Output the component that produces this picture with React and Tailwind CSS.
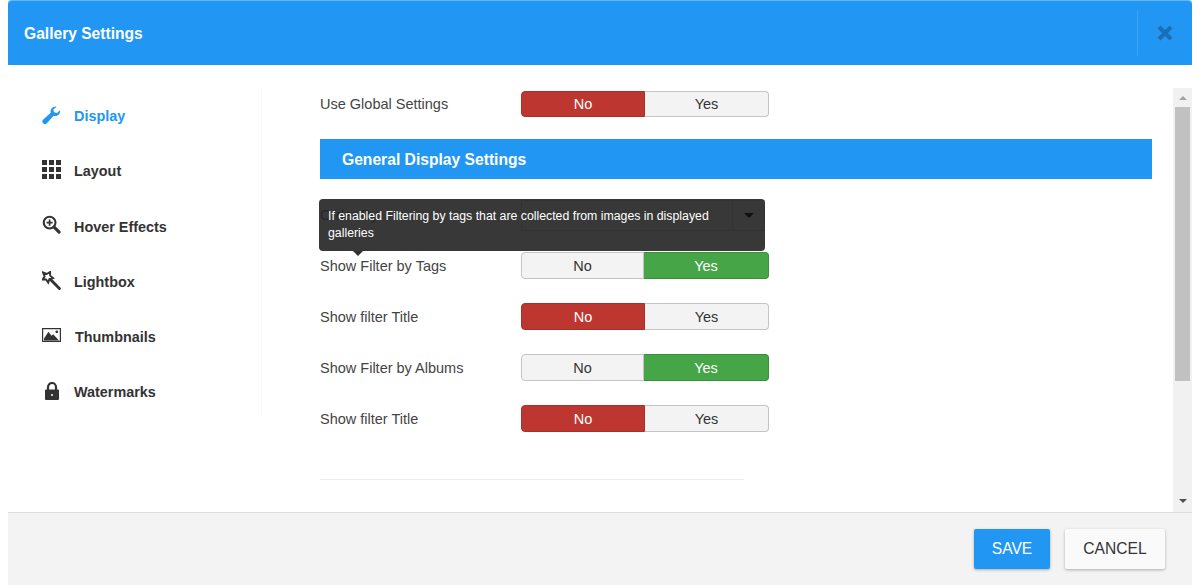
import React from "react";

const WrenchIcon = ({ className }) => (
  <svg viewBox="0 0 20 20" className={className} fill="currentColor">
    <path d="M14.2 1a5.2 5.2 0 0 0-5 6.7L1.3 14.8a2.7 2.7 0 0 0 3.8 3.900l7.200-7.900a5.2 5.2 0 0 0 6.700-5.900l-3.300 3-3-.7-.8-3 3.400-3a5 5 0 0 0-1.100-.2z" />
  </svg>
);

const GridIcon = ({ className }) => (
  <svg viewBox="0 0 19 19" className={className} fill="currentColor">
    {[0, 7, 14].map((y) =>
      [0, 7, 14].map((x) => <rect key={`${x}-${y}`} x={x} y={y} width="5" height="5" />)
    )}
  </svg>
);

const ZoomIcon = ({ className }) => (
  <svg viewBox="0 0 20 20" className={className} fill="none" stroke="currentColor">
    <circle cx="8" cy="8" r="6.2" strokeWidth="2.2" />
    <path d="M4.8 8h6.4M8 4.8v6.4" strokeWidth="1.8" />
    <path d="M12.8 12.8L18 18" strokeWidth="3.2" strokeLinecap="round" />
  </svg>
);

const WandIcon = ({ className }) => (
  <svg viewBox="0 0 20 20" className={className} fill="none" stroke="currentColor">
    <path d="M1 1.5l4 1.6L8.5 1l.1 3.9 3 2.5-3.8 1.100-1.300 3.700-2.200-3.200-3.900-.1 2.400-3.100z" strokeWidth="2" strokeLinejoin="miter" />
    <path d="M9.5 9.5L18.3 18.3" strokeWidth="3" strokeLinecap="round" />
  </svg>
);

const PictureIcon = ({ className }) => (
  <svg viewBox="0 0 19 14" className={className} fill="currentColor">
    <path fillRule="evenodd" d="M0 0h19v14H0zM1.2 1.2v11.6h16.6V1.2z" />
    <path d="M2 12.5v-2L6.5 3.8l3 4 1.7-1.5 5.8 6.2z" />
    <circle cx="14.8" cy="3.8" r="1.4" />
  </svg>
);

const LockIcon = ({ className }) => (
  <svg viewBox="0 0 14 18" className={className}>
    <path d="M3 8V5a4 4 0 0 1 8 0v3" fill="none" stroke="currentColor" strokeWidth="2.2" />
    <path fillRule="evenodd" fill="currentColor" d="M1 7.5h12a1 1 0 0 1 1 1V17a1 1 0 0 1-1 1H1a1 1 0 0 1-1-1V8.500a1 1 0 0 1 1-1zM7 12a1 1 0 1 0 0 2 1 1 0 0 0 0-2z" />
  </svg>
);

const navItems = [
  { label: "Display", icon: <WrenchIcon className="w-[20px] h-[20px]" />, active: true, gap: "gap-[13px]" },
  { label: "Layout", icon: <GridIcon className="w-[19px] h-[19px]" />, gap: "gap-[13px]" },
  { label: "Hover Effects", icon: <ZoomIcon className="w-[19px] h-[19px]" />, gap: "gap-[13px]" },
  { label: "Lightbox", icon: <WandIcon className="w-[19px] h-[19px]" />, gap: "gap-[13px]" },
  { label: "Thumbnails", icon: <PictureIcon className="w-[19px] h-[14px]" />, gap: "gap-[14px]" },
  { label: "Watermarks", icon: <LockIcon className="w-[14px] h-[18px]" />, gap: "gap-[13px]" },
];

const SwitchRow = ({ label, value, rowClass = "h-[27px] mb-[24px]", textPad = "pt-[2px]" }) => (
  <div className={`flex items-center ${rowClass}`}>
    <div className={`w-[201px] ${textPad} text-[14.5px] text-[#444]`}>{label}</div>
    <div className="flex w-[248px] h-full text-[14.5px]">
      <div
        className={`flex items-center justify-center ${textPad} rounded-l-[4px] border ${
          value === "no"
            ? "w-[124px] bg-[#bd362f] border-[#a9302a] text-white font-medium"
            : "w-[123px] bg-[#f3f3f3] border-[#c4c4c4] text-[#333]"
        }`}
      >
        No
      </div>
      <div
        className={`flex-1 flex items-center justify-center ${textPad} rounded-r-[4px] border border-l-0 ${
          value === "yes"
            ? "bg-[#46a546] border-[#3b8f3b] text-white"
            : "bg-[#f3f3f3] border-[#c4c4c4] text-[#333]"
        }`}
      >
        Yes
      </div>
    </div>
  </div>
);

export default function App() {
  return (
    <div className="w-[1200px] h-[586px] bg-white overflow-hidden font-['Liberation_Sans',Arial,sans-serif]">
      <div className="mx-2 w-[1184px] h-[585px] flex flex-col">
        {/* Header */}
        <div className="h-[65px] bg-[#2196f3] rounded-t-[4px] border-t border-[#64b5f6] flex items-center justify-between">
          <h3 className="pl-4 pt-[1px] text-[15.6px] font-bold text-white">Gallery Settings</h3>
          <div className="h-[46px] w-[55px] border-l border-[#3ea3f5] flex items-center justify-center">
            <svg viewBox="0 0 16 16" className="w-[16px] h-[16px] text-[#1a6fb5]" fill="none" stroke="currentColor" strokeWidth="4">
              <path d="M2 2l12 12M14 2L2 14" />
            </svg>
          </div>
        </div>

        {/* Body */}
        <div className="h-[447px] flex pt-[23px]">
          <div className="w-[254px] h-[327px] border-r border-[#f8f8f8] pl-[34px] pt-[1px]">
            {navItems.map((item) => (
              <div
                key={item.label}
                className={`h-[55.2px] flex items-center ${item.gap} text-[14.4px] font-bold ${
                  item.active ? "text-[#2196f3]" : "text-[#333]"
                }`}
              >
                <span className="w-[19px] flex justify-center -mt-[4px]">{item.icon}</span>
                <span className="pt-[1px]">{item.label}</span>
              </div>
            ))}
          </div>

          <div className="relative flex-1 pl-[58px] pt-[3px]">
            <SwitchRow label="Use Global Settings" value="no" rowClass="h-[26px] mb-[25px]" textPad="pt-[1px]" />
            <div className="mr-[40px] h-[40px] -mt-[3px] bg-[#2196f3] flex items-center pl-[22px] pt-[2px] text-[15.65px] font-bold text-white">
              General Display Settings
            </div>

            {/* Row hidden behind the tooltip */}
            <div className="flex items-center h-[31px] mt-[21px] mb-[21px]">
              <div className="w-[201px] text-[14.5px] text-[#444]">Order By</div>
              <div className="w-[244px] h-[31px] border border-[#ccc] flex justify-end">
                <div className="w-[32px] border-l border-[#ccc]" />
              </div>
            </div>

            <SwitchRow label="Show Filter by Tags" value="yes" />
            <SwitchRow label="Show filter Title" value="no" />
            <SwitchRow label="Show Filter by Albums" value="yes" />
            <SwitchRow label="Show filter Title" value="no" />

            <div className="w-[424px] border-t border-[#eee] mt-[47px]" />

            {/* Tooltip */}
            <div className="absolute left-[57px] top-[111px] w-[446px] h-[52px] bg-[#222]/90 rounded-[4px] px-[9px] py-[9px] text-[12.3px] leading-[17px] text-white">
              If enabled Filtering by tags that are collected from images in displayed galleries
              <div className="absolute left-[34px] -bottom-[5px] w-0 h-0 border-x-[5px] border-x-transparent border-t-[5px] border-t-[#2f2f2f]" />
              <div className="absolute right-[11px] top-[14px] w-0 h-0 border-x-[5px] border-x-transparent border-t-[5px] border-t-[#111]" />
            </div>

            {/* Scrollbar */}
            <div className="absolute right-0 top-0 bottom-0 w-[19px] bg-[#f1f1f1] flex flex-col items-center">
              <div className="h-[19px] flex items-center justify-center">
                <div className="w-0 h-0 border-x-[4px] border-x-transparent border-b-[4px] border-b-[#a3a3a3]" />
              </div>
              <div className="w-[15px] h-[274px] bg-[#c1c1c1]" />
              <div className="mt-auto h-[22px] flex items-center justify-center">
                <div className="w-0 h-0 border-x-[4px] border-x-transparent border-t-[4px] border-t-[#505050]" />
              </div>
            </div>
          </div>
        </div>

        {/* Footer */}
        <div className="flex-1 bg-[#f3f3f3] border-t border-[#ddd] flex items-center justify-end gap-[15px] pr-[27px]">
          <button className="w-[76px] h-[40px] rounded-[2px] bg-[#2196f3] text-white text-[15.6px] shadow-[0_1px_3px_rgba(0,0,0,0.3)]">
            SAVE
          </button>
          <button className="w-[100px] h-[40px] rounded-[2px] bg-[#fafafa] text-[#333] text-[15.6px] shadow-[0_1px_3px_rgba(0,0,0,0.3)]">
            CANCEL
          </button>
        </div>
      </div>
    </div>
  );
}
